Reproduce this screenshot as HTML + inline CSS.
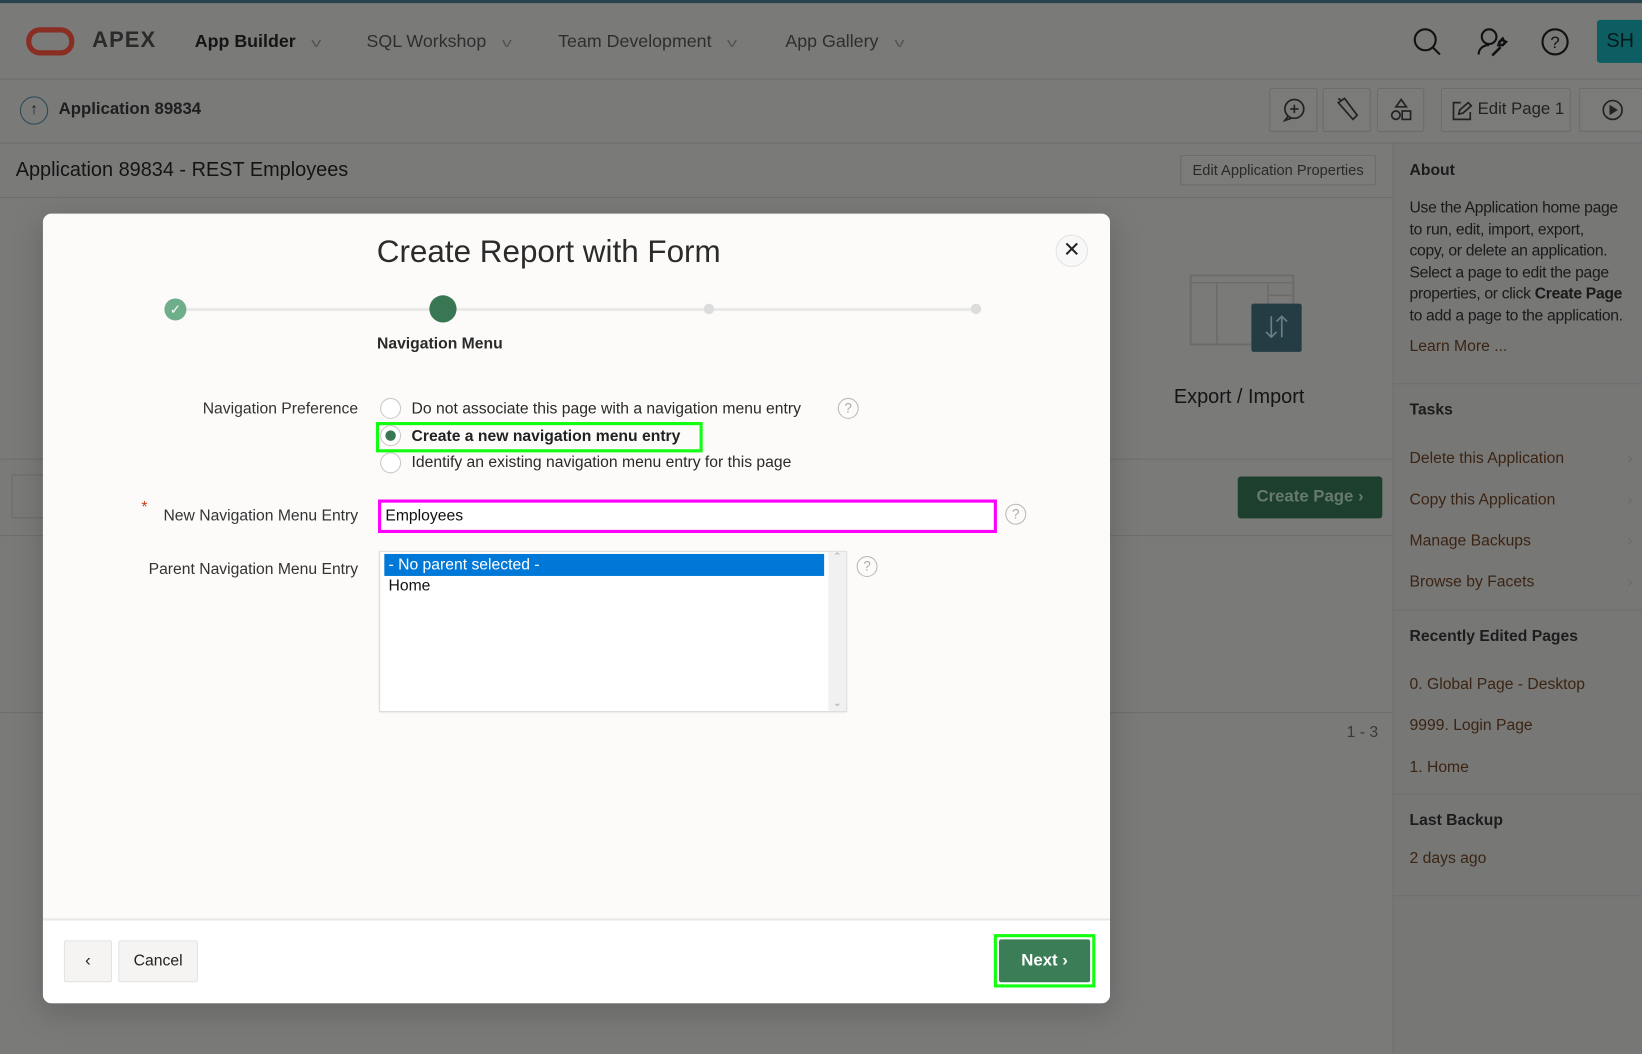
<!DOCTYPE html>
<html><head><meta charset="utf-8"><style>
*{box-sizing:border-box;margin:0;padding:0}
html,body{width:1642px;height:1054px;overflow:hidden;background:#7a7a79;font-family:"Liberation Sans",sans-serif}
#w{position:absolute;left:0;top:0;width:1568px;height:1006px;transform:scale(1.04719);transform-origin:0 0;background:#7a7a79;color:#1a1a1a}
.a{position:absolute}
.hl{position:absolute;height:1px;background:#6e6e6d}
.tb{position:absolute;border:1px solid #6c6c6b;border-radius:2px;background:#7b7b7a}
.sb{color:#3b2413;font-size:15px;position:absolute;left:1346px}
.sh{font-weight:bold;font-size:15px;color:#1c1c1c;position:absolute;left:1346px}
.chev{position:absolute;left:1554px;color:#6a6a69;font-size:15px}
.lab{position:absolute;font-size:15px;color:#333;text-align:right}
.rad{position:absolute;width:20px;height:20px;border:1px solid #c8c8c8;border-radius:50%;background:#fff}
.help{position:absolute;width:20px;height:20px;border:1.5px solid #b8b8b8;border-radius:50%;color:#aaa;font-size:13px;text-align:center;line-height:17px}
.dd{font-weight:normal;color:#555;font-size:12px;margin-left:12px;display:inline-block;transform:scaleX(1.6)}
</style></head><body><div id="w">
<div class="a" style="left:0;top:0;width:1568px;height:3px;background:#27434d"></div>
<div class="a" style="left:25px;top:26px;width:46px;height:27px;border:5px solid #8a2d22;border-radius:13px"></div>
<div class="a" style="left:88px;top:27px;font-size:21px;font-weight:bold;color:#2a2a2a;letter-spacing:1px">APEX</div>
<div class="a" style="left:186px;top:30px;font-size:17px;font-weight:bold;color:#141414">App Builder <span class="dd">v</span></div>
<div class="a" style="left:350px;top:30px;font-size:17px;color:#2e2e2e">SQL Workshop <span class="dd">v</span></div>
<div class="a" style="left:533px;top:30px;font-size:17px;color:#2e2e2e">Team Development <span class="dd">v</span></div>
<div class="a" style="left:750px;top:30px;font-size:17px;color:#2e2e2e">App Gallery <span class="dd">v</span></div>
<svg class="a" style="left:1348px;top:26px" width="30" height="30" viewBox="0 0 30 30"><circle cx="13" cy="12" r="10" fill="none" stroke="#111" stroke-width="2"/><path d="M20 19l7 7" stroke="#111" stroke-width="2"/></svg>
<svg class="a" style="left:1409px;top:25px" width="32" height="32" viewBox="0 0 32 32"><circle cx="13" cy="10" r="7" fill="none" stroke="#111" stroke-width="2"/><path d="M3 27c0-6 5-9 10-9" fill="none" stroke="#111" stroke-width="2"/><path d="M16 28l8-8M22 18l4 0 3-3-2-1-1-2-3 3z" stroke="#111" stroke-width="2.5" fill="none"/></svg>
<svg class="a" style="left:1471px;top:26px" width="30" height="30" viewBox="0 0 30 30"><circle cx="14" cy="14" r="12" fill="none" stroke="#111" stroke-width="2"/><text x="14" y="20" font-size="16" text-anchor="middle" font-family="Liberation Sans" fill="#111">?</text></svg>
<div class="a" style="left:1525px;top:19px;width:43px;height:41px;background:#0d5e63;border-radius:3px 0 0 3px;color:#061a1c;font-size:19px;line-height:41px;padding-left:9px">SH</div>
<div class="hl" style="left:0;top:75px;width:1568px"></div>
<div class="a" style="left:19px;top:92px;width:27px;height:27px;border:1.5px solid #2b4a55;border-radius:50%;text-align:center;font-size:15px;line-height:24px;color:#222">&#8593;</div>
<div class="a" style="left:56px;top:96px;font-size:16px;font-weight:bold;color:#1e1e1e">Application 89834</div>
<div class="tb" style="left:1212px;top:84px;width:46px;height:42px"><svg width="44" height="40" viewBox="0 0 44 40"><circle cx="23" cy="19" r="9" fill="none" stroke="#222" stroke-width="1.6"/><path d="M17 26l-3 4 6-2M23 15v8M19 19h8" stroke="#222" stroke-width="1.6" fill="none"/></svg></div>
<div class="tb" style="left:1263px;top:84px;width:46px;height:42px"><svg width="44" height="40" viewBox="0 0 44 40"><path d="M14 13l6-4 12 16-4 4z M17 11l-3-2" stroke="#222" stroke-width="1.6" fill="none"/></svg></div>
<div class="tb" style="left:1315px;top:84px;width:45px;height:42px"><svg width="44" height="40" viewBox="0 0 44 40"><path d="M22 10l5 7h-10z" stroke="#222" stroke-width="1.6" fill="none"/><circle cx="17" cy="25" r="4" fill="none" stroke="#222" stroke-width="1.6"/><rect x="23" y="21" width="8" height="8" fill="none" stroke="#222" stroke-width="1.6"/></svg></div>
<div class="tb" style="left:1376px;top:84px;width:124px;height:42px;font-size:16px;color:#222;line-height:40px;padding-left:34px">Edit Page 1<svg class="a" style="left:9px;top:11px" width="20" height="20" viewBox="0 0 20 20"><path d="M9 2H2v16h16v-7M7 13l1-4 8-7 3 3-8 7z" stroke="#222" stroke-width="1.6" fill="none"/></svg></div>
<div class="tb" style="left:1508px;top:84px;width:62px;height:42px"><svg width="60" height="40" viewBox="0 0 60 40"><circle cx="31" cy="20" r="9" fill="none" stroke="#222" stroke-width="1.6"/><path d="M28 15v10l8-5z" fill="#222"/></svg></div>
<div class="hl" style="left:0;top:136px;width:1568px"></div>
<div class="a" style="left:15px;top:152px;font-size:19px;color:#141414">Application 89834 - REST Employees</div>
<div class="tb" style="left:1127px;top:148px;width:187px;height:29px;font-size:14px;color:#2a2a2a;line-height:27px;text-align:center">Edit Application Properties</div>
<div class="hl" style="left:0;top:188px;width:1330px"></div>
<div class="a" style="left:1330px;top:137px;width:238px;height:869px;background:#777776;border-left:1px solid #6e6e6d"></div>
<div class="sh" style="top:154px">About</div>
<div class="a" style="left:1346px;top:189px;font-size:15px;line-height:20.5px;color:#1a1a1a;white-space:nowrap;letter-spacing:-0.3px">Use the Application home page<br>to run, edit, import, export,<br>copy, or delete an application.<br>Select a page to edit the page<br>properties, or click <b>Create Page</b><br>to add a page to the application.</div>
<div class="sb" style="top:322px">Learn More ...</div>
<div class="hl" style="left:1331px;top:366px;width:237px"></div>
<div class="sh" style="top:383px">Tasks</div>
<div class="sb" style="top:429px">Delete this Application</div><div class="chev" style="top:429px">&#8250;</div>
<div class="sb" style="top:469px">Copy this Application</div><div class="chev" style="top:469px">&#8250;</div>
<div class="sb" style="top:508px">Manage Backups</div><div class="chev" style="top:508px">&#8250;</div>
<div class="sb" style="top:547px">Browse by Facets</div><div class="chev" style="top:547px">&#8250;</div>
<div class="hl" style="left:1331px;top:582px;width:237px"></div>
<div class="sh" style="top:599px">Recently Edited Pages</div>
<div class="sb" style="top:645px">0. Global Page - Desktop</div>
<div class="sb" style="top:684px">9999. Login Page</div>
<div class="sb" style="top:724px">1. Home</div>
<div class="hl" style="left:1331px;top:758px;width:237px"></div>
<div class="sh" style="top:775px">Last Backup</div>
<div class="sb" style="top:811px">2 days ago</div>
<div class="hl" style="left:1331px;top:855px;width:237px"></div>
<svg class="a" style="left:1136px;top:262px" width="110" height="76" viewBox="0 0 110 76"><rect x="1" y="1" width="98" height="66" fill="none" stroke="#6c6c6b" stroke-width="2"/><path d="M1 8h98M26 8v58M75 8v58M75 20h24M75 29h24" stroke="#6c6c6b" stroke-width="1.5"/><rect x="59" y="28" width="48" height="46" rx="2" fill="#243d45"/><path d="M78 40v20M73 55l5 5 5-5M88 60V40M83 45l5-5 5 5" stroke="#6a7e84" stroke-width="1.6" fill="none"/></svg>
<div class="a" style="left:1121px;top:369px;font-size:19px;color:#141414">Export / Import</div>
<div class="hl" style="left:0;top:438px;width:1330px"></div>
<div class="a" style="left:11px;top:453px;width:60px;height:42px;border:1px solid #6c6c6b;border-radius:2px"></div>
<div class="a" style="left:1182px;top:455px;width:138px;height:40px;background:#1d3f2d;border-radius:3px;color:#687a6d;font-weight:bold;font-size:16px;line-height:40px;text-align:center">Create Page &#8250;</div>
<div class="hl" style="left:0;top:511px;width:1330px"></div>
<div class="hl" style="left:0;top:680px;width:1330px"></div>
<div class="a" style="left:1286px;top:691px;font-size:15px;color:#3a3a3a">1 - 3</div>
<div class="a" style="left:41px;top:204px;width:1019px;height:754px;background:#fcfbfa;border-radius:8px;box-shadow:0 8px 30px rgba(0,0,0,.18);overflow:hidden">
 <div class="a" style="left:0;top:673px;width:1019px;height:81px;background:#fff;border-top:2px solid #e8e8e8"></div>
 <div class="a" style="left:0;top:20px;width:966px;text-align:center;font-size:30px;color:#2b2b2b">Create Report with Form</div>
 <div class="a" style="left:967px;top:20px;width:31px;height:31px;border:1px solid #e3e3e3;border-radius:50%;background:#f8f8f8;text-align:center;line-height:29px;font-size:20px;color:#222">&#10005;</div>
 <div class="a" style="left:127px;top:90px;width:764px;height:3px;background:#e9e9e8"></div>
 <div class="a" style="left:116px;top:81px;width:21px;height:21px;border-radius:50%;background:#6fae8a;color:#fff;font-size:13px;text-align:center;line-height:21px">&#10003;</div>
 <div class="a" style="left:369px;top:78px;width:26px;height:26px;border-radius:50%;background:#387654"></div>
 <div class="a" style="left:631px;top:86px;width:10px;height:10px;border-radius:50%;background:#dcdcdc"></div>
 <div class="a" style="left:886px;top:86px;width:10px;height:10px;border-radius:50%;background:#dcdcdc"></div>
 <div class="a" style="left:319px;top:116px;font-size:15px;font-weight:bold;color:#2a2a2a">Navigation Menu</div>
 <div class="lab" style="left:100px;top:178px;width:201px">Navigation Preference</div>
 <div class="rad" style="left:322px;top:176px"></div>
 <div class="a" style="left:352px;top:178px;font-size:15px;color:#2a2a2a">Do not associate this page with a navigation menu entry</div>
 <div class="help" style="left:759px;top:176px">?</div>
 <div class="a" style="left:318px;top:199px;width:312px;height:29px;border:3px solid #12ff12"></div>
 <div class="rad" style="left:322px;top:202px"><div style="width:10px;height:10px;border-radius:50%;background:#387654;margin:4px"></div></div>
 <div class="a" style="left:352px;top:204px;font-size:15px;font-weight:bold;color:#222">Create a new navigation menu entry</div>
 <div class="rad" style="left:322px;top:228px"></div>
 <div class="a" style="left:352px;top:229px;font-size:15px;color:#2a2a2a">Identify an existing navigation menu entry for this page</div>
 <div class="a" style="left:94px;top:272px;color:#c43c1c;font-size:15px">*</div>
 <div class="lab" style="left:100px;top:280px;width:201px">New Navigation Menu Entry</div>
 <div class="a" style="left:320px;top:273px;width:591px;height:32px;border:3px solid #ff00ff;background:#fff;font-size:15px;line-height:26px;padding-left:4px;color:#111">Employees</div>
 <div class="help" style="left:919px;top:277px">?</div>
 <div class="lab" style="left:80px;top:331px;width:221px">Parent Navigation Menu Entry</div>
 <div class="a" style="left:321px;top:322px;width:447px;height:154px;border:1px solid #dcdcdc;background:#fff;box-shadow:0 1px 2px rgba(0,0,0,.1)">
  <div class="a" style="left:4px;top:2px;width:420px;height:21px;background:#0078d7;color:#fff;font-size:15px;line-height:21px;padding-left:4px">- No parent selected -</div>
  <div class="a" style="left:8px;top:24px;font-size:15px;color:#111">Home</div>
  <div class="a" style="left:428px;top:0;width:17px;height:152px;background:#f1f1f1;color:#aaa;font-size:10px;text-align:center">&#8963;<div style="position:absolute;bottom:2px;width:17px">&#8964;</div></div>
 </div>
 <div class="help" style="left:777px;top:327px">?</div>
 <div class="a" style="left:20px;top:694px;width:46px;height:40px;background:#f5f4f2;border:1px solid #e2e2e2;border-radius:2px;text-align:center;line-height:38px;font-size:16px;color:#222">&#8249;</div>
 <div class="a" style="left:72px;top:694px;width:76px;height:40px;background:#f5f4f2;border:1px solid #e2e2e2;border-radius:2px;text-align:center;line-height:38px;font-size:15px;color:#222">Cancel</div>
 <div class="a" style="left:908px;top:688px;width:97px;height:51px;border:3px solid #12ff12;background:#fff"><div style="margin:2px;height:41px;background:#3a7d56;border-radius:2px;color:#fff;font-weight:bold;font-size:16px;line-height:41px;text-align:center">Next &#8250;</div></div>
</div>
</div></body></html>
